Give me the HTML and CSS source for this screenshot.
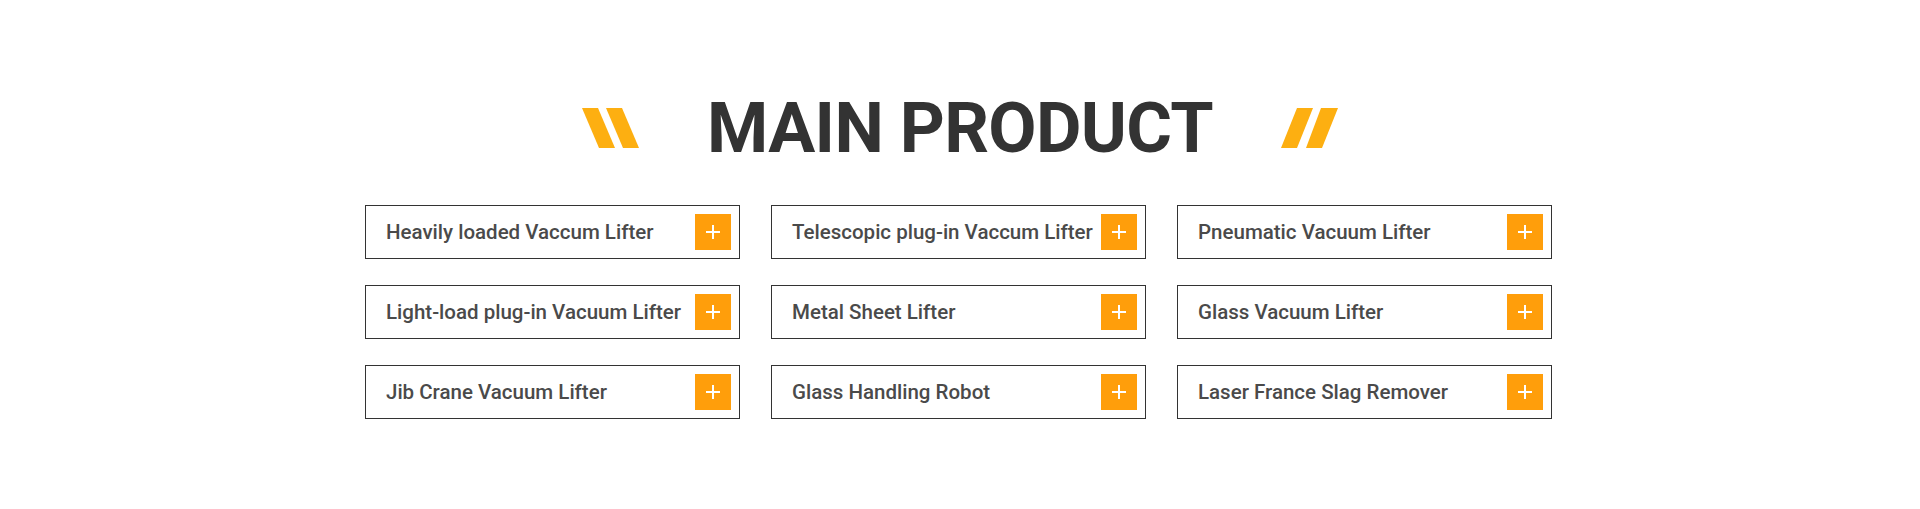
FILE: index.html
```html
<!DOCTYPE html>
<html lang="en">

<head>
    <meta charset="UTF-8">
    <meta name="viewport" content="width=device-width, initial-scale=1.0">
    <title>Main Product</title>
    <link rel="stylesheet" href="styles.css">
</head>

<body>
    <section class="main-product">
        <div class="title-row">
            <svg class="stripes" width="57" height="40" viewBox="0 0 57 40">
                <polygon points="0,0 16,0 33,40 17,40" />
                <polygon points="24,0 40,0 57,40 41,40" />
            </svg>
            <h2 class="title">MAIN PRODUCT</h2>
            <svg class="stripes" width="57" height="40" viewBox="0 0 57 40">
                <polygon points="16,0 32,0 16,40 0,40" />
                <polygon points="40,0 57,0 41,40 25,40" />
            </svg>
        </div>

        <div class="product-grid">
            <a class="product-item" href="#">
                <span>Heavily loaded Vaccum Lifter</span>
                <i class="plus"><svg width="14" height="14" viewBox="0 0 14 14"><path d="M7 0v14M0 7h14" /></svg></i>
            </a>
            <a class="product-item" href="#">
                <span>Telescopic plug-in Vaccum Lifter</span>
                <i class="plus"><svg width="14" height="14" viewBox="0 0 14 14"><path d="M7 0v14M0 7h14" /></svg></i>
            </a>
            <a class="product-item" href="#">
                <span>Pneumatic Vacuum Lifter</span>
                <i class="plus"><svg width="14" height="14" viewBox="0 0 14 14"><path d="M7 0v14M0 7h14" /></svg></i>
            </a>
            <a class="product-item" href="#">
                <span>Light-load plug-in Vacuum Lifter</span>
                <i class="plus"><svg width="14" height="14" viewBox="0 0 14 14"><path d="M7 0v14M0 7h14" /></svg></i>
            </a>
            <a class="product-item" href="#">
                <span>Metal Sheet Lifter</span>
                <i class="plus"><svg width="14" height="14" viewBox="0 0 14 14"><path d="M7 0v14M0 7h14" /></svg></i>
            </a>
            <a class="product-item" href="#">
                <span>Glass Vacuum Lifter</span>
                <i class="plus"><svg width="14" height="14" viewBox="0 0 14 14"><path d="M7 0v14M0 7h14" /></svg></i>
            </a>
            <a class="product-item" href="#">
                <span>Jib Crane Vacuum Lifter</span>
                <i class="plus"><svg width="14" height="14" viewBox="0 0 14 14"><path d="M7 0v14M0 7h14" /></svg></i>
            </a>
            <a class="product-item" href="#">
                <span>Glass Handling Robot</span>
                <i class="plus"><svg width="14" height="14" viewBox="0 0 14 14"><path d="M7 0v14M0 7h14" /></svg></i>
            </a>
            <a class="product-item" href="#">
                <span>Laser France Slag Remover</span>
                <i class="plus"><svg width="14" height="14" viewBox="0 0 14 14"><path d="M7 0v14M0 7h14" /></svg></i>
            </a>
        </div>
    </section>
</body>

</html>
```

FILE: styles.css
```css
body {
    margin: 0;
    padding: 0;
    background: #fff;
    font-family: Roboto, "Noto Sans", sans-serif;
}

.main-product {
    padding-top: 93px;
}

.title-row {
    display: flex;
    justify-content: center;
    align-items: center;
    gap: 68px;
}

.stripes polygon {
    fill: #fdaf11;
}

.title {
    margin: 0;
    font-size: 70px;
    line-height: 70px;
    font-weight: 700;
    letter-spacing: -0.7px;
    color: #333;
}

.product-grid {
    box-sizing: border-box;
    width: 1190px;
    padding-right: 3px;
    margin: 42px auto 0;
    display: grid;
    grid-template-columns: repeat(3, 375px);
    column-gap: 31px;
    row-gap: 26px;
}

.product-item {
    box-sizing: border-box;
    height: 54px;
    border: 1px solid #333;
    padding: 0 8px 0 20px;
    display: flex;
    align-items: center;
    justify-content: space-between;
    text-decoration: none;
    color: #4a4a4a;
    font-size: 20.5px;
    font-weight: 500;
}

.plus {
    width: 36px;
    height: 36px;
    flex-shrink: 0;
    background: #ff9e0b;
    display: flex;
    align-items: center;
    justify-content: center;
}

.plus svg {
    display: block;
}

.plus path {
    stroke: #fff;
    stroke-width: 2;
    fill: none;
}
```
